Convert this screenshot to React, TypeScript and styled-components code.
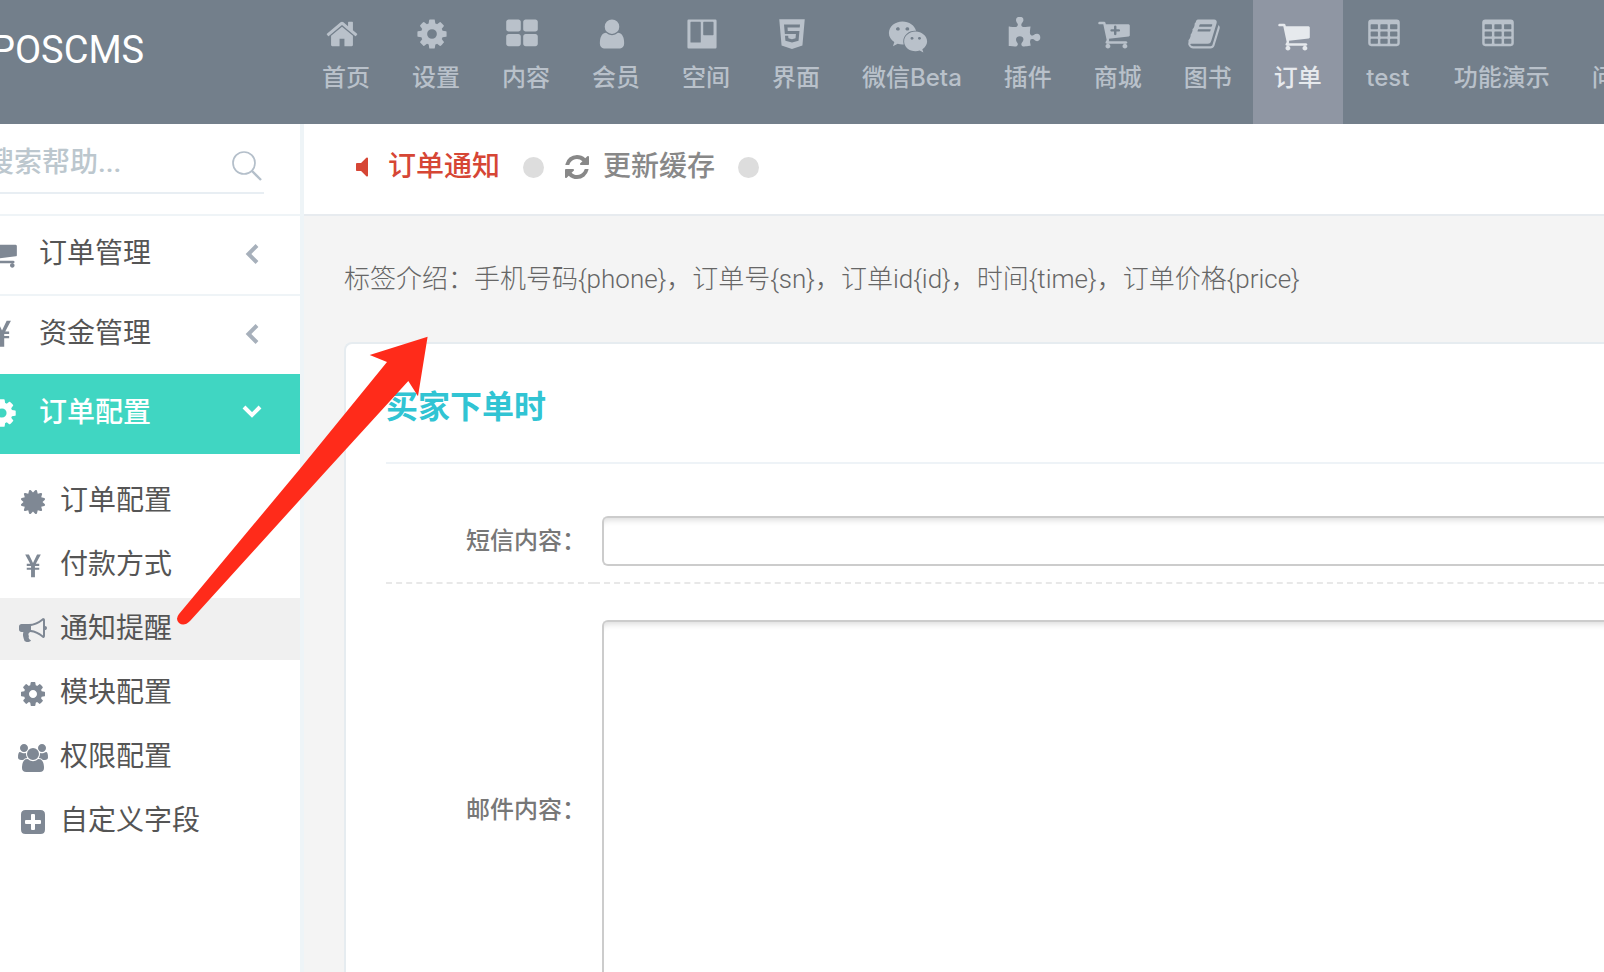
import React from "react";
import styled, { createGlobalStyle } from "styled-components";
import { FaHtml5, FaWeixin } from "react-icons/fa";

const GlobalStyle = createGlobalStyle`
  *, *::before, *::after { box-sizing: border-box; }
  body {
    margin: 0;
    background: #f4f4f4;
    font-family: Roboto, "Noto Sans CJK SC", sans-serif;
  }
  a { color: inherit; text-decoration: none; }
  button, input, textarea { font: inherit; }
`;

/* ---------- icons ---------- */

const CART =
  "M704 1536q0 52-38 90t-90 38-90-38-38-90 38-90 90-38 90 38 38 90zm896 0q0 52-38 90t-90 38-90-38-38-90 38-90 90-38 90 38 38 90zm128-1088v512q0 24-16.5 42.5t-40.5 21.5l-1044 122q13 60 13 70 0 16-24 64h920q26 0 45 19t19 45-19 45-45 19h-1024q-26 0-45-19t-19-45q0-11 8-31.5t16-36 21.5-40 15.5-29.5l-177-823h-204q-26 0-45-19t-19-45 19-45 45-19h256q16 0 28.5 6.5t19.5 15.5 13 24.5 8 26 5.5 29.5 4.5 26h1201q26 0 45 19t19 45z";

const GLYPHS = {
  home: "M1472 992v480q0 26-19 45t-45 19h-384v-384h-256v384h-384q-26 0-45-19t-19-45v-480q0-1 .5-3t.5-3l575-474 575 474q1 2 1 6zm223-69l-62 74q-8 9-21 11h-3q-13 0-21-7l-692-577-692 577q-12 8-24 7-13-2-21-11l-62-74q-8-10-7-23.5t11-21.5l719-599q32-26 76-26t76 26l244 204v-195q0-14 9-23t23-9h192q14 0 23 9t9 23v408l219 182q10 8 11 21.5t-7 23.5z",
  cog: "M1152 896q0-106-75-181t-181-75-181 75-75 181 75 181 181 75 181-75 75-181zm512-109v222q0 12-8 23t-20 13l-185 28q-19 54-39 91 35 50 107 138 10 12 10 25t-9 23q-27 37-99 108t-94 71q-12 0-26-9l-138-108q-44 23-91 38-16 136-29 186-7 28-36 28h-222q-14 0-24.5-8.5t-11.5-21.5l-28-184q-49-16-90-37l-141 107q-10 9-25 9-14 0-25-11-126-114-165-168-7-10-7-23 0-12 8-23 15-21 51-66.5t54-70.5q-27-50-41-99l-183-27q-13-2-21-12.5t-8-23.5v-222q0-12 8-23t19-13l186-28q14-46 39-92-40-57-107-138-10-12-10-24 0-10 9-23 26-36 98.5-107.5t94.5-71.5q13 0 26 10l138 107q44-23 91-38 16-136 29-186 7-28 36-28h222q14 0 24.5 8.5t11.5 21.5l28 184q49 16 90 37l142-107q9-9 24-9 13 0 25 10 129 119 165 170 7 8 7 22 0 12-8 23-15 21-51 66.5t-54 70.5q26 50 41 98l183 28q13 2 21 12.5t8 23.5z",
  blocks:
    "M832 1024v384q0 52-38 90t-90 38h-512q-52 0-90-38t-38-90v-384q0-52 38-90t90-38h512q52 0 90 38t38 90zm0-768v384q0 52-38 90t-90 38h-512q-52 0-90-38t-38-90v-384q0-52 38-90t90-38h512q52 0 90 38t38 90zm896 768v384q0 52-38 90t-90 38h-512q-52 0-90-38t-38-90v-384q0-52 38-90t90-38h512q52 0 90 38t38 90zm0-768v384q0 52-38 90t-90 38h-512q-52 0-90-38t-38-90v-384q0-52 38-90t90-38h512q52 0 90 38t38 90z",
  user: "M1536 1399q0 109-62.5 187t-150.5 78h-854q-88 0-150.5-78t-62.5-187q0-85 8.5-160.5t31.5-152 58.5-131 94-89 134.5-34.5q131 128 313 128t313-128q76 0 134.5 34.5t94 89 58.5 131 31.5 152 8.5 160.5zm-256-887q0 159-112.5 271.5t-271.5 112.5-271.5-112.5-112.5-271.5 112.5-271.5 271.5-112.5 271.5 112.5 112.5 271.5z",
  board:
    "M192 128h1408q64 0 64 64v1408q0 64-64 64h-1408q-64 0-64-64v-1408q0-64 64-64zM320 256q-32 0-32 32v1024q0 32 32 32h480q32 0 32-32v-1024q0-32-32-32zM992 256q-32 0-32 32v640q0 32 32 32h480q32 0 32-32v-640q0-32-32-32z",
  puzzle:
    "M1755 1083q0 81-44.5 135t-123.5 54q-41 0-77.5-17.5t-59-38-56.5-38-71-17.5q-110 0-110 124 0 39 16 115t15 115v5q-22 0-33 1-34 3-97.5 11.5t-115.5 13.5-98 5q-61 0-103-26.5t-42-83.5q0-37 17.5-71t38-56.5 38-59 17.5-77.5q0-79-54-123.5t-135-44.5q-84 0-143 45.5t-59 127.5q0 43 15 83t33.5 64.5 33.5 53 15 50.5q0 45-46 89-37 35-117 35-95 0-245-24-9-2-27.5-4t-27.5-4l-13-2q-1 0-3-1-2 0-2-1v-1024q2 1 17.5 3.5t34 5 21.5 3.5q150 24 245 24 80 0 117-35 46-44 46-89 0-22-15-50.5t-33.5-53-33.5-64.5-15-83q0-82 59-127.5t144-45.5q80 0 134 44.5t54 123.5q0 41-17.5 77.5t-38 59-38 56.5-17.5 71q0 57 42 83.5t103 26.5q64 0 180-15t163-17v2q-1 2-3.5 17.5t-5 34-3.5 21.5q-24 150-24 245 0 80 35 117 44 46 89 46 22 0 50.5-15t53-33.5 64.5-33.5 83-15q82 0 127.5 59t45.5 143z",
  cart: CART,
  cartPlus:
    "M1216 704q0-26-19-45t-45-19h-128v-128q0-26-19-45t-45-19-45 19-19 45v128h-128q-26 0-45 19t-19 45 19 45 45 19h128v128q0 26 19 45t45 19 45-19 19-45v-128h128q26 0 45-19t19-45z" +
    CART,
  book: "M1703 478q40 57 18 129l-275 906q-19 64-76.5 107.5t-122.5 43.5h-923q-77 0-148.5-53.5t-99.5-131.5q-24-67-2-127 0-4 3-27t4-37q1-8-3-21.5t-3-19.5q2-11 8-21t16.5-23.5 16.5-23.5q23-38 45-91.5t30-91.5q3-10 .5-30t-.5-28q3-11 17-28t17-23q21-36 42-92t25-90q1-9-2.5-32t.5-28q4-13 22-30.5t22-22.5q19-26 42.5-84.5t27.5-96.5q1-8-3-25.5t-2-26.5q2-8 9-18t18-23 17-21q8-12 16.5-30.5t15-35 16-36 19.5-32 26.5-23.5 36-11.5 47.5 5.5l-1 3q38-9 51-9h761q74 0 114 56t18 130l-274 906q-36 119-71.5 153.5t-128.5 34.5h-869q-27 0-38 15-11 16-1 43 24 70 144 70h923q29 0 56-15.5t35-41.5l300-987q7-22 5-57 38 15 59 43zm-1064 2q-4 13 2 22.5t20 9.5h608q13 0 25.5-9.5t16.5-22.5l21-64q4-13-2-22.5t-20-9.5h-608q-13 0-25.5 9.5t-16.5 22.5zm-83 256q-4 13 2 22.5t20 9.5h608q13 0 25.5-9.5t16.5-22.5l21-64q4-13-2-22.5t-20-9.5h-608q-13 0-25.5 9.5t-16.5 22.5z",
  table:
    "M224 128h1344q160 0 160 160v1088q0 160-160 160h-1344q-160 0-160-160v-1088q0-160 160-160z" +
    [384, 768, 1152]
      .map((y) =>
        [192, 704, 1216]
          .map(
            (x) =>
              `M${x + 32} ${y}h320q32 0 32 32v192q0 32-32 32h-320q-32 0-32-32v-192q0-32 32-32z`
          )
          .join("")
      )
      .join(""),
  refresh:
    "M1639 1056q0 5-1 7-64 268-268 434.5t-478 166.5q-146 0-282.5-55t-243.5-157l-129 129q-19 19-45 19t-45-19-19-45v-448q0-26 19-45t45-19h448q26 0 45 19t19 45-19 45l-137 137q71 66 161 102t187 36q134 0 250-65t186-179q11-17 53-117 8-23 30-23h192q13 0 22.5 9.5t9.5 22.5zm25-800v448q0 26-19 45t-45 19h-448q-26 0-45-19t-19-45 19-45l138-138q-148-137-349-137-134 0-250 65t-186 179q-11 17-53 117-8 23-30 23h-199q-13 0-22.5-9.5t-9.5-22.5v-7q65-268 270-434.5t480-166.5q146 0 284 55.5t245 156.5l130-129q19-19 45-19t45 19 19 45z",
  speaker:
    "M1280 352v1088q0 26-19 45t-45 19-45-19l-333-333h-262q-26 0-45-19t-19-45v-384q0-26 19-45t45-19h262l333-333q19-19 45-19t45 19 19 45z",
  badge:
    "M1504 896l138 135q30 28 20 70-12 41-52 51l-188 48 53 186q12 41-19 70-29 31-70 19l-186-53-48 188q-10 40-51 52-12 2-19 2-31 0-51-22l-135-138-135 138q-28 30-70 20-41-11-51-52l-48-188-186 53q-41 12-70-19-31-29-19-70l53-186-188-48q-40-10-52-51-10-42 20-70l138-135-138-135q-30-28-20-70 12-41 52-51l188-48-53-186q-12-41 19-70 29-31 70-19l186 53 48-188q10-41 51-51 41-12 70 19l135 139 135-139q29-30 70-19 41 10 51 51l48 188 186-53q41-12 70 19 31 29 19 70l-53 186 188 48q40 10 52 51 10 42-20 70z",
  yen: "M396 160h240l260 540 260-540h240l-318 596h218v136h-276v112h276v136h-276v468h-248v-468h-276v-136h276v-112h-276v-136h218z",
  megaphone:
    "M1664 640q53 0 90.5 37.5t37.5 90.5-37.5 90.5-90.5 37.5v384q0 52-38 90t-90 38q-417-347-812-380-58 19-91 66t-31 100.5 40 92.5q-20 33-23 65.5t6 58 33.5 55 48 50 61.5 50.5q-29 58-111.5 83t-168.5 11.5-132-55.5q-7-23-29.5-87.5t-32-94.5-23-89-15-101 3.5-98.5 22-110.5h-122q-66 0-113-47t-47-113v-192q0-66 47-113t113-47h480q435 0 896-384 52 0 90 38t38 90v384zm-128 604v-954q-394 302-768 343v270q377 42 768 341z",
  users:
    "M593 896q-162 5-265 128h-134q-82 0-138-40.5t-56-118.5q0-353 124-353 6 0 43.5 21t97.5 42.5 119 21.5q67 0 133-23-5 37-5 66 0 139 81 256zm1071 637q0 120-73 189.5t-194 69.5h-874q-121 0-194-69.5t-73-189.5q0-53 3.5-103.5t14-109 26.5-108.5 43-97.5 62-81 85.5-53.5 111.5-20q10 0 43 21.5t73 48 107 48 135 21.5 135-21.5 107-48 73-48 43-21.5q61 0 111.5 20t85.5 53.5 62 81 43 97.5 26.5 108.5 14 109 3.5 103.5zm-1024-1277q0 106-75 181t-181 75-181-75-75-181 75-181 181-75 181 75 75 181zm704 384q0 159-112.5 271.5t-271.5 112.5-271.5-112.5-112.5-271.5 112.5-271.5 271.5-112.5 271.5 112.5 112.5 271.5zm576 225q0 78-56 118.5t-138 40.5h-134q-103-123-265-128 81-117 81-256 0-29-5-66 66 23 133 23 59 0 119-21.5t97.5-42.5 43.5-21q124 0 124 353zm-128-609q0 106-75 181t-181 75-181-75-75-181 75-181 181-75 181 75 75 181z",
  plusBox:
    "M416 128h960q288 0 288 288v960q0 288-288 288h-960q-288 0-288-288v-960q0-288 288-288zM832 384q-64 0-64 64v320h-320q-64 0-64 64v128q0 64 64 64h320v320q0 64 64 64h128q64 0 64-64v-320h320q64 0 64-64v-128q0-64-64-64h-320v-320q0-64-64-64z",
};

type GlyphName = keyof typeof GLYPHS;

const Glyph = ({ name, size }: { name: GlyphName; size: number }) => (
  <svg
    height={size}
    width={name === "users" ? Math.round((size * 1920) / 1792) : size}
    viewBox={name === "users" ? "0 0 1920 1792" : "0 0 1792 1792"}
    fill="currentColor"
    fillRule="evenodd"
    aria-hidden="true"
  >
    <path d={GLYPHS[name]} />
  </svg>
);

const Chevron = ({ down }: { down?: boolean }) => (
  <svg
    width="24"
    height="24"
    viewBox="0 0 24 24"
    fill="none"
    stroke="currentColor"
    strokeWidth="4"
    aria-hidden="true"
  >
    <path d={down ? "M4 6l8 8 8-8" : "M17 3.500L8.500 12l8.500 8.500"} />
  </svg>
);

/* ---------- layout ---------- */

const Page = styled.div`
  position: relative;
  display: flex;
  flex-direction: column;
  height: 100vh;
  overflow: hidden;
`;

const Header = styled.header`
  display: flex;
  flex: none;
  height: 124px;
  background: #737f8b;
`;

const Brand = styled.a`
  flex: none;
  width: 310px;
  margin-left: -9px;
  padding-top: 25px;
  color: #fff;
  font-size: 38px;
  line-height: 50px;
`;

const Nav = styled.nav`
  display: flex;
`;

const NavItem = styled.a<{ $active?: boolean; $start?: boolean }>`
  display: flex;
  flex: none;
  flex-direction: column;
  align-items: ${(p) => (p.$start ? "flex-start" : "center")};
  min-width: 90px;
  padding: 17px 21px 0;
  background: ${(p) => (p.$active ? "#8f96a3" : "transparent")};
  color: ${(p) => (p.$active ? "#e6e9ed" : "#b9c1ca")};
`;

const NavIcon = styled.span<{ $active?: boolean }>`
  display: flex;
  justify-content: center;
  align-items: ${(p) => (p.$active ? "flex-end" : "flex-start")};
  height: 36px;
  padding-right: 8px;
`;

const NavLabel = styled.span`
  padding-top: 8px;
  font-family: Inter, "Noto Sans CJK SC", sans-serif;
  font-size: 24px;
  font-weight: 500;
  line-height: 34px;
  white-space: nowrap;
`;

const Body = styled.div`
  display: flex;
  flex: 1;
  min-height: 0;
`;

const Sidebar = styled.aside`
  flex: none;
  width: 320px;
  margin-left: -16px;
  border-right: 4px solid #eef4f7;
  background: #fff;
`;

const SearchArea = styled.form`
  height: 92px;
  padding-right: 36px;
  border-bottom: 2px solid #eff4f7;
`;

const SearchField = styled.div`
  display: flex;
  align-items: center;
  height: 70px;
  padding-top: 8px;
  border-bottom: 2px solid #e8eef3;
`;

const SearchInput = styled.input`
  flex: 1;
  min-width: 0;
  height: 60px;
  padding: 0 0 0 2px;
  border: 0;
  outline: 0;
  background: transparent;
  color: #555;
  font-size: 28px;
  font-weight: 500;
  &::placeholder {
    color: #bcc7ce;
    opacity: 1;
  }
`;

const SearchButton = styled.button`
  display: flex;
  padding: 8px 0 0;
  border: 0;
  background: transparent;
  color: #b4bfca;
`;

const List = styled.ul`
  margin: 0;
  padding: 0;
  list-style: none;
`;

const MenuLink = styled.a<{ $active?: boolean; $divided?: boolean }>`
  display: flex;
  align-items: center;
  height: ${(p) => (p.$active || p.$divided ? 80 : 78)}px;
  padding: 0 36px 2px 2px;
  border-bottom: ${(p) => (p.$divided ? "2px solid #eff4f7" : "0")};
  background: ${(p) => (p.$active ? "#40d6c2" : "transparent")};
  color: ${(p) => (p.$active ? "#fff" : "#7f8894")};
`;

const MenuText = styled.span<{ $active?: boolean }>`
  flex: 1;
  padding-left: 21px;
  color: ${(p) => (p.$active ? "#fff" : "#555")};
  font-size: 28px;
  font-weight: ${(p) => (p.$active ? 500 : 400)};
  line-height: 40px;
`;

const Arrow = styled.span<{ $active?: boolean }>`
  display: flex;
  color: ${(p) => (p.$active ? "#fff" : "#a7b0bb")};
`;

const SubMenu = styled(List)`
  display: grid;
  gap: 2px;
  padding-top: 16px;
`;

const SubLink = styled.a<{ $active?: boolean }>`
  display: flex;
  align-items: center;
  height: 62px;
  padding-left: 34px;
  background: ${(p) => (p.$active ? "#f0f0f0" : "transparent")};
  color: #7f8894;
`;

const SubIcon = styled.span`
  display: flex;
  justify-content: center;
  width: 30px;
  padding-top: 2px;
`;

const SubText = styled.span`
  padding-left: 12px;
  color: #555;
  font-size: 28px;
  line-height: 40px;
`;

const Main = styled.main`
  flex: 1;
  min-width: 0;
`;

const Toolbar = styled.div`
  display: flex;
  align-items: center;
  height: 92px;
  padding: 0 0 4px 44px;
  border-bottom: 2px solid #e7ebef;
  background: #fff;
`;

const ToolLink = styled.a<{ $active?: boolean }>`
  display: flex;
  align-items: center;
  gap: 12px;
  color: ${(p) => (p.$active ? "#d64635" : "#888")};
  font-size: 28px;
  font-weight: 500;
  line-height: 40px;
`;

const Dot = styled.span`
  width: 21px;
  height: 21px;
  margin: 0 19px 0 23px;
  border-radius: 50%;
  background: #ddd;
`;

const Content = styled.div`
  padding: 40px 0 0 40px;
`;

const Hint = styled.p`
  margin: 0 0 40px;
  color: #666;
  font-size: 26px;
  font-weight: 300;
  line-height: 46px;
  white-space: nowrap;
`;

const Card = styled.section`
  padding: 40px 0 40px 40px;
  border: 2px solid #e6ecf0;
  border-right: 0;
  border-radius: 8px 0 0 8px;
  background: #fff;
`;

const CardTitle = styled.h2`
  margin: 0;
  padding-bottom: 32px;
  border-bottom: 2px solid #eef3f7;
  color: #31c4d3;
  font-size: 32px;
  font-weight: 700;
  line-height: 46px;
`;

const FormGrid = styled.form`
  display: grid;
  grid-template-columns: 208px 1fr;
  padding-top: 36px;
`;

const LabelCell = styled.div`
  display: flex;
  align-items: center;
  justify-content: flex-end;
  padding-right: 8px;
  border-bottom: 2px dashed #e8e8e8;
  color: #777;
  font-size: 24px;
  font-weight: 500;
  line-height: 34px;
`;

const FieldCell = styled.div<{ $tall?: boolean }>`
  padding: ${(p) => (p.$tall ? 36 : 16)}px 0 ${(p) => (p.$tall ? 36 : 16)}px 8px;
  border-bottom: 2px dashed #e8e8e8;
`;

const TextInput = styled.input`
  display: block;
  width: 100%;
  height: 50px;
  padding: 0 12px;
  border: 2px solid #ccc;
  border-right: 0;
  border-radius: 6px 0 0 6px;
  outline: 0;
  box-shadow: inset 0 8px 6px -6px rgba(0, 0, 0, 0.15);
  font-size: 24px;
`;

const TextArea = styled.textarea`
  display: block;
  width: 100%;
  height: 380px;
  padding: 12px;
  border: 2px solid #ccc;
  border-right: 0;
  border-radius: 6px 0 0 6px;
  outline: 0;
  resize: none;
  box-shadow: inset 0 8px 6px -6px rgba(0, 0, 0, 0.15);
  font-size: 24px;
`;

const Pointer = styled.svg`
  position: absolute;
  top: 330px;
  left: 170px;
  pointer-events: none;
`;

/* ---------- content ---------- */

const NAV: { label: string; icon?: React.ReactNode; active?: boolean }[] = [
  { label: "首页", icon: <Glyph name="home" size={34} /> },
  { label: "设置", icon: <Glyph name="cog" size={34} /> },
  { label: "内容", icon: <Glyph name="blocks" size={34} /> },
  { label: "会员", icon: <Glyph name="user" size={34} /> },
  { label: "空间", icon: <Glyph name="board" size={34} /> },
  { label: "界面", icon: <FaHtml5 size={34} /> },
  { label: "微信Beta", icon: <FaWeixin size={40} /> },
  { label: "插件", icon: <Glyph name="puzzle" size={34} /> },
  { label: "商城", icon: <Glyph name="cartPlus" size={34} /> },
  { label: "图书", icon: <Glyph name="book" size={34} /> },
  { label: "订单", icon: <Glyph name="cart" size={34} />, active: true },
  { label: "test", icon: <Glyph name="table" size={34} /> },
  { label: "功能演示", icon: <Glyph name="table" size={34} /> },
  { label: "问" },
];

const MENU: { label: string; icon: GlyphName; active?: boolean; divided?: boolean }[] = [
  { label: "订单管理", icon: "cart", divided: true },
  { label: "资金管理", icon: "yen" },
  { label: "订单配置", icon: "cog", active: true },
];

const SUBMENU: { label: string; icon: GlyphName; active?: boolean }[] = [
  { label: "订单配置", icon: "badge" },
  { label: "付款方式", icon: "yen" },
  { label: "通知提醒", icon: "megaphone", active: true },
  { label: "模块配置", icon: "cog" },
  { label: "权限配置", icon: "users" },
  { label: "自定义字段", icon: "plusBox" },
];

export default function App() {
  return (
    <Page>
      <GlobalStyle />
      <Header>
        <Brand href="#">POSCMS</Brand>
        <Nav>
          {NAV.map((item) => (
            <NavItem href="#" key={item.label} $active={item.active} $start={!item.icon}>
              <NavIcon $active={item.active}>{item.icon}</NavIcon>
              <NavLabel>{item.label}</NavLabel>
            </NavItem>
          ))}
        </Nav>
      </Header>

      <Body>
        <Sidebar>
          <SearchArea>
            <SearchField>
              <SearchInput type="text" placeholder="搜索帮助..." aria-label="搜索帮助" />
              <SearchButton type="button" aria-label="搜索">
                <svg width="34" height="32" viewBox="0 0 34 32" fill="none" stroke="currentColor" strokeWidth="1.700">
                  <circle cx="14" cy="13" r="11" />
                  <path d="M22 21l9 9" strokeWidth="2.400" />
                </svg>
              </SearchButton>
            </SearchField>
          </SearchArea>
          <List>
            {MENU.map((item) => (
              <li key={item.label}>
                <MenuLink href="#" $active={item.active} $divided={item.divided}>
                  <Glyph name={item.icon} size={32} />
                  <MenuText $active={item.active}>{item.label}</MenuText>
                  <Arrow $active={item.active}>
                    <Chevron down={item.active} />
                  </Arrow>
                </MenuLink>
              </li>
            ))}
          </List>
          <SubMenu>
            {SUBMENU.map((item) => (
              <li key={item.label}>
                <SubLink href="#" $active={item.active}>
                  <SubIcon>
                    <Glyph name={item.icon} size={28} />
                  </SubIcon>
                  <SubText>{item.label}</SubText>
                </SubLink>
              </li>
            ))}
          </SubMenu>
        </Sidebar>

        <Main>
          <Toolbar>
            <ToolLink href="#" $active>
              <Glyph name="speaker" size={28} />
              订单通知
            </ToolLink>
            <Dot />
            <ToolLink href="#">
              <Glyph name="refresh" size={28} />
              更新缓存
            </ToolLink>
            <Dot />
          </Toolbar>
          <Content>
            <Hint>
              标签介绍：手机号码{"{phone}"}，订单号{"{sn}"}，订单id{"{id}"}，时间{"{time}"}，订单价格{"{price}"}
            </Hint>
            <Card>
              <CardTitle>买家下单时</CardTitle>
              <FormGrid>
                <LabelCell>
                  <label htmlFor="sms">短信内容：</label>
                </LabelCell>
                <FieldCell>
                  <TextInput id="sms" type="text" />
                </FieldCell>
                <LabelCell>
                  <label htmlFor="mail">邮件内容：</label>
                </LabelCell>
                <FieldCell $tall>
                  <TextArea id="mail" />
                </FieldCell>
              </FormGrid>
            </Card>
          </Content>
        </Main>
      </Body>

      <Pointer width="270" height="310" viewBox="170 330 270 310" aria-hidden="true">
        <path
          d="M387 362L299 470L179 614Q175 619 179 623Q184 627 190 621L327 470L408.300 381L418 396.300L427.600 336.700L369.700 355Z"
          fill="#ff2b1a"
        />
      </Pointer>
    </Page>
  );
}
